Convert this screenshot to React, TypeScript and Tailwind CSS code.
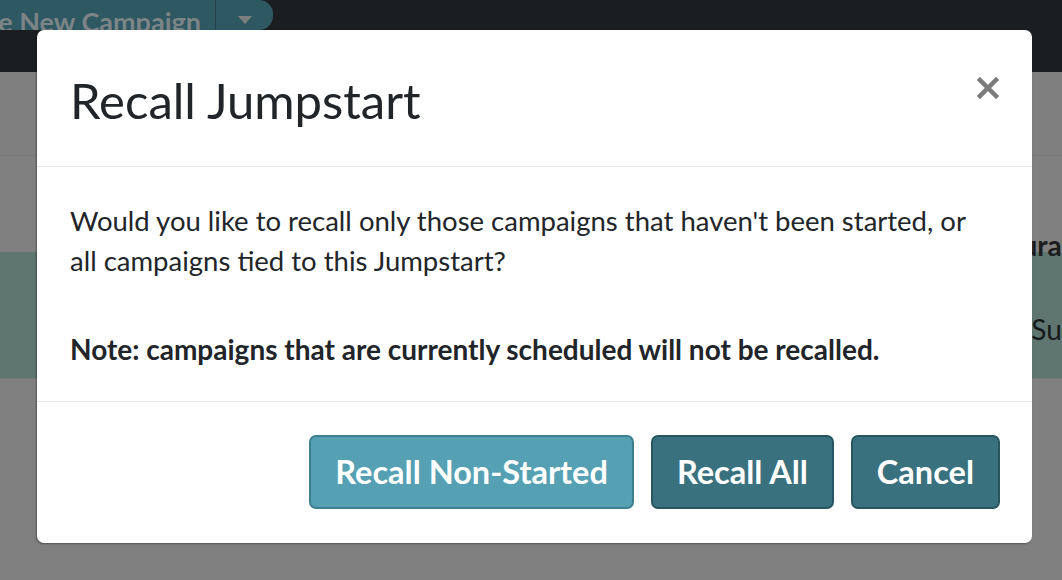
import React from "react";

const FONT = { fontFamily: "Lato, 'Open Sans', sans-serif" };

function Backdrop() {
  return (
    <div className="flex flex-col w-full h-full">
      <div className="h-[72px] bg-[#1b1e21] flex items-start">
        <div className="flex h-[30px] rounded-br-[14px] rounded-tr-[14px] bg-[#2e5862] overflow-hidden">
          <div className="w-[215px] flex justify-end items-start pt-[8px] pr-[14px] overflow-hidden whitespace-nowrap text-[27px] font-bold text-[#7d8487] leading-none">
            Create New Campaign
          </div>
          <div className="w-px bg-[#213f46]" />
          <div className="w-[57px] flex items-center justify-center pt-[10px]">
            <svg width="16" height="10" viewBox="0 0 16 10">
              <path d="M1 1 L15 1 L8 9 Z" fill="#7d7f80" />
            </svg>
          </div>
        </div>
      </div>
      <div className="h-[83px] bg-[#7f7f7f]" />
      <div className="h-[97px] bg-[#808080] border-t border-[#797979] flex items-end justify-end">
        <span className="text-[28px] font-bold text-[#1a1c1e] mr-[-10px] translate-y-[14px]">Durat</span>
      </div>
      <div className="h-[126px] bg-[#5f756f] flex items-center justify-end">
        <span className="text-[28px] text-[#15191a] mr-[-10px] translate-y-[14px]">Sur</span>
      </div>
      <div className="flex-1 bg-[#808080] border-t border-[#797979]" />
    </div>
  );
}

function Btn({ children, light }: { children: React.ReactNode; light?: boolean }) {
  return (
    <button
      className={
        "h-[74px] px-[24px] rounded-[7px] border-2 text-white text-[32.5px] font-bold leading-none " +
        (light
          ? "bg-[#55a0b3] border-[#3e7f8f]"
          : "bg-[#3a717e] border-[#285660]")
      }
    >
      {children}
    </button>
  );
}

export default function App() {
  return (
    <div className="relative w-[1062px] h-[580px] overflow-hidden" style={FONT}>
      <Backdrop />
      <div className="absolute left-[37px] top-[30px] w-[995px] bg-white rounded-[7px] shadow-[-1px_1px_2px_rgba(0,0,0,0.35)]">
        <div className="h-[137px] flex items-center justify-between pl-[33px] pr-[32px] pt-[4px] border-b border-[#e6e7e9]">
          <h1 className="text-[49px] leading-none font-normal text-[#212529]">Recall Jumpstart</h1>
          <button className="w-[24px] h-[24px] flex items-center justify-center mt-[-24px]">
            <svg width="22" height="22" viewBox="0 0 22 22">
              <path d="M3 3 L19 19 M19 3 L3 19" stroke="#7b7b7b" strokeWidth="4.5" strokeLinecap="square" />
            </svg>
          </button>
        </div>
        <div className="pl-[33px] pr-[40px] pt-[34px] pb-[32px] border-b border-[#e6e7e9] text-[27.5px] leading-[40px] text-[#212529]">
          <p className="mb-[48px]">
            Would you like to recall only those campaigns that haven't been started, or
            all campaigns tied to this Jumpstart?
          </p>
          <p className="font-bold text-[28px]">Note: campaigns that are currently scheduled will not be recalled.</p>
        </div>
        <div className="h-[141px] flex items-start pt-[33px] justify-end gap-[17px] pr-[32px]">
          <Btn light>Recall Non-Started</Btn>
          <Btn>Recall All</Btn>
          <Btn>Cancel</Btn>
        </div>
      </div>
    </div>
  );
}
